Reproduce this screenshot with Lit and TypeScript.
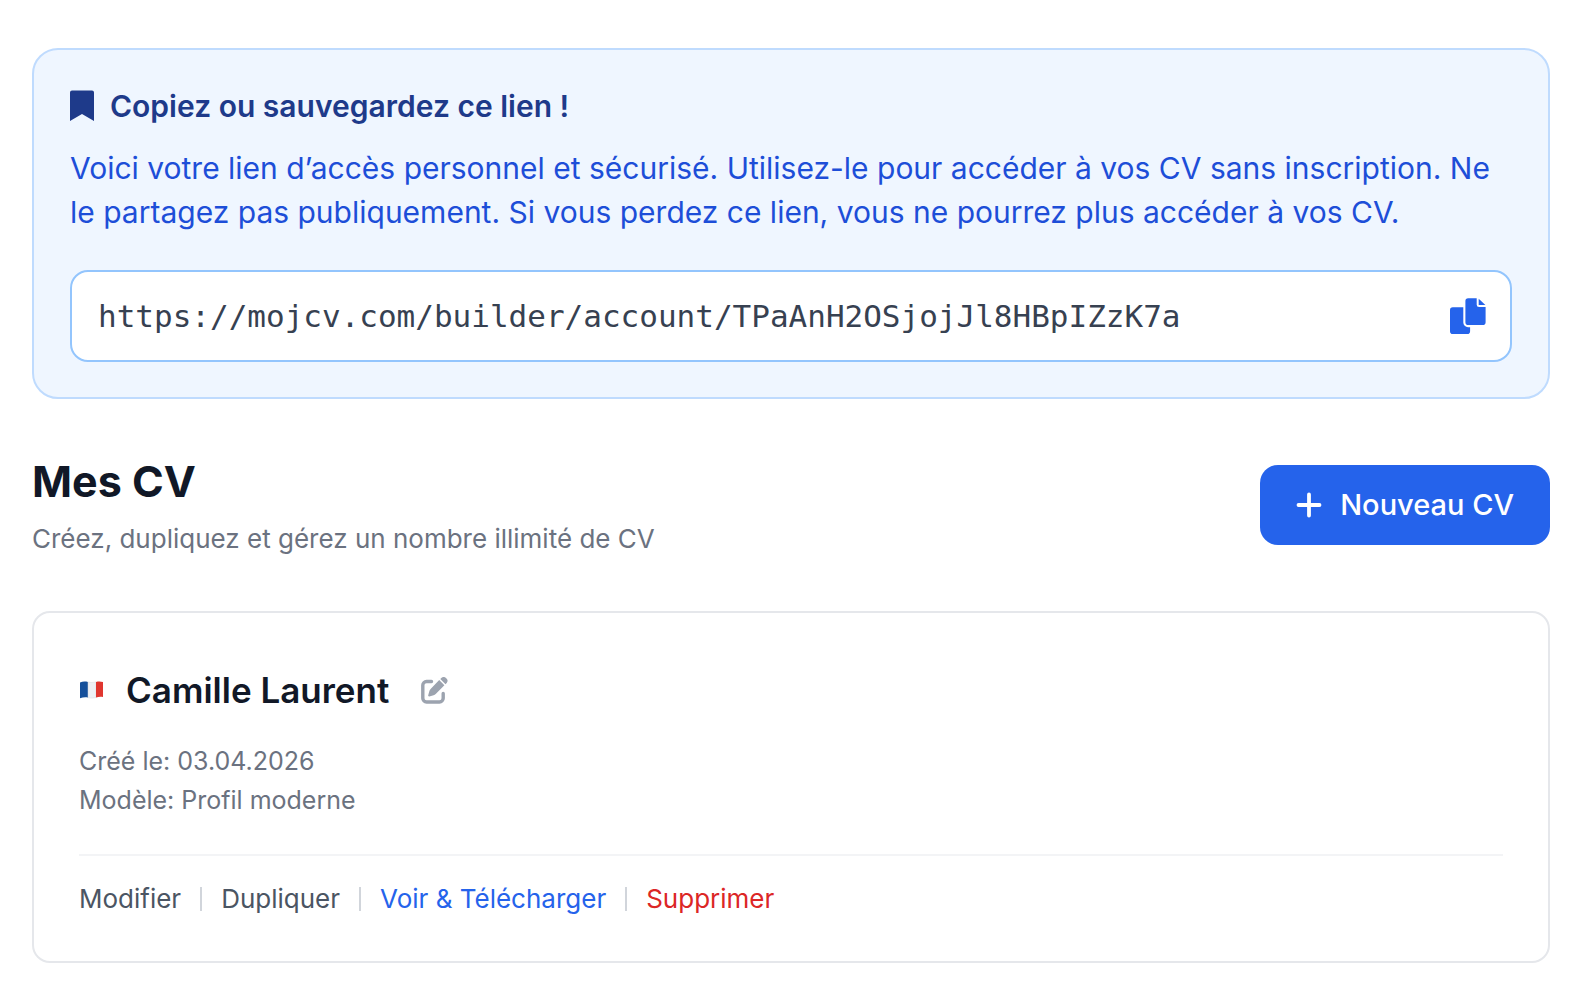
import { LitElement, html, css } from "lit";
import { customElement, property } from "lit/decorators.js";

const base = css`
  :host {
    display: block;
    box-sizing: border-box;
    font-family: Inter, sans-serif;
  }
  *,
  *::before {
    box-sizing: border-box;
  }
  h1,
  h2,
  p {
    margin: 0;
  }
  svg {
    display: block;
    flex: none;
  }
  button {
    margin: 0;
    padding: 0;
    border: 0;
    background: none;
    font: inherit;
    color: inherit;
    cursor: pointer;
  }
`;

@customElement("access-link")
class AccessLink extends LitElement {
  @property() url = "";

  static styles = [
    base,
    css`
      .panel {
        padding: 34px 36px 35px;
        border: 2px solid #bfdbfe;
        border-radius: 26px;
        background: #eff6ff;
      }
      .title {
        display: flex;
        align-items: center;
        gap: 16px;
        color: #1e3a8a;
        font-size: 30px;
        line-height: 44px;
        font-weight: 600;
      }
      .text {
        margin-top: 18px;
        color: #1d4ed8;
        font-size: 30px;
        line-height: 44px;
      }
      .field {
        display: flex;
        align-items: center;
        gap: 24px;
        margin-top: 36px;
        padding: 24px;
        border: 2px solid #93c5fd;
        border-radius: 18px;
        background: #fff;
      }
      .url {
        flex: 1;
        min-width: 0;
        height: 40px;
        padding: 0 2px;
        border: 0;
        outline: 0;
        background: none;
        color: #374151;
        font: 31px "DejaVu Sans Mono", monospace;
      }
      .copy {
        color: #2563eb;
      }
    `,
  ];

  private copy() {
    navigator.clipboard?.writeText(this.url);
  }

  render() {
    return html`
      <section class="panel">
        <h2 class="title">
          <svg width="24" height="32" viewBox="0 0 24 32" fill="currentColor" aria-hidden="true">
            <path d="M2 .5H22a2 2 0 0 1 2 2V31L12 24 0 31V2.500A2 2 0 0 1 2 .5Z" />
          </svg>
          <span>Copiez ou sauvegardez ce lien&nbsp;!</span>
        </h2>
        <p class="text">
          Voici votre lien d’accès personnel et sécurisé. Utilisez-le pour accéder à vos CV sans
          inscription. Ne le partagez pas publiquement. Si vous perdez ce lien, vous ne pourrez plus
          accéder à vos CV.
        </p>
        <div class="field">
          <input class="url" type="text" readonly aria-label="Lien d’accès" .value=${this.url} />
          <button class="copy" type="button" aria-label="Copier le lien" @click=${this.copy}>
            <svg width="36" height="36" viewBox="0 0 36 36" fill="currentColor" aria-hidden="true">
              <path
                d="M18.2 .3H26.7V6.700A2.400 2.400 0 0 0 29.1 9.100H35.600V24.300A2.800 2.800 0 0 1 32.800 27.100H18.200A2.800 2.800 0 0 1 15.400 24.300V3.100A2.800 2.800 0 0 1 18.200 .3Z"
              />
              <path d="M28.700 .7 35.400 7.100H28.700Z" />
              <path
                d="M2.800 9.200H13.300V24.500A4.700 4.700 0 0 0 18 29.200H20.100V33.200A2.800 2.800 0 0 1 17.300 36H2.800A2.800 2.800 0 0 1 0 33.200V12A2.800 2.800 0 0 1 2.800 9.200Z"
              />
            </svg>
          </button>
        </div>
      </section>
    `;
  }
}

@customElement("cv-card")
class CvCard extends LitElement {
  @property() name = "";
  @property() created = "";
  @property() template = "";

  static styles = [
    base,
    css`
      .card {
        padding: 53px 45px 43px;
        border: 2px solid #e5e7eb;
        border-radius: 18px;
        background: #fff;
      }
      .head {
        display: flex;
        align-items: center;
      }
      .name {
        margin: 0 32px 0 22px;
        color: #111827;
        font-size: 35px;
        line-height: 48px;
        font-weight: 600;
      }
      .edit {
        color: #9ca3af;
      }
      .meta {
        margin-top: 28px;
        color: #6b7280;
        font-size: 25px;
        line-height: 39px;
      }
      .actions {
        display: flex;
        flex-wrap: wrap;
        align-items: center;
        gap: 19px;
        margin-top: 34px;
        padding-top: 24px;
        border-top: 2px solid #f3f4f6;
        color: #4b5563;
        font-size: 26px;
        line-height: 38px;
      }
      .link {
        color: inherit;
        text-decoration: none;
      }
      .primary {
        color: #2563eb;
      }
      .danger {
        color: #dc2626;
      }
      .bar {
        width: 2px;
        height: 24px;
        background: #d1d5db;
      }
    `,
  ];

  render() {
    return html`
      <article class="card">
        <div class="head">
          <svg width="25" height="20" viewBox="0 0 25 20" role="img" aria-label="Français">
            <path d="M1 2.400C4 1.300 6.500 1.500 9 2V17.600C6.500 17 4 17.200 1 18.300Z" fill="#15509b" />
            <path
              d="M9 2C12 2.600 14 2.600 17 1.900V17.500C14 18.200 12 18.200 9 17.600Z"
              fill="#eef0f4"
              stroke="#d5d8de"
              stroke-width=".5"
            />
            <path d="M17 1.900C19.500 1.300 21.500 1.300 24 2V17C21.500 16.500 19.500 16.800 17 17.400Z" fill="#e0362f" />
          </svg>
          <h2 class="name">${this.name}</h2>
          <button class="edit" type="button" aria-label="Renommer">
            <svg width="27" height="27" viewBox="0 0 27 27" aria-hidden="true">
              <path
                d="M10.500 4.500H5.500A3.700 3.700 0 0 0 1.800 8.200V21.300A3.700 3.700 0 0 0 5.500 25H18.500A3.700 3.700 0 0 0 22.200 21.300V16.500"
                fill="none"
                stroke="currentColor"
                stroke-width="3.400"
                stroke-linecap="round"
              />
              <path
                d="M18.200 3.100 23.400 8.300 14.700 17C14.100 17.600 13.400 18 12.600 18.200L8.300 19.400C7.600 19.600 7 19 7.200 18.300L8.400 14C8.600 13.200 9 12.500 9.600 11.900Z"
                fill="currentColor"
              />
              <path
                d="M19.300 2 20.600 .8C21.800 -.3 23.600 -.3 24.700 .8L25.700 1.800C26.900 2.900 26.900 4.700 25.700 5.900L24.500 7.200Z"
                fill="currentColor"
              />
            </svg>
          </button>
        </div>
        <div class="meta">
          <p>Créé le: ${this.created}</p>
          <p>Modèle: ${this.template}</p>
        </div>
        <div class="actions">
          <a class="link" href="#modifier">Modifier</a>
          <span class="bar"></span>
          <button type="button">Dupliquer</button>
          <span class="bar"></span>
          <a class="link primary" href="#voir">Voir &amp; Télécharger</a>
          <span class="bar"></span>
          <button class="danger" type="button">Supprimer</button>
        </div>
      </article>
    `;
  }
}

@customElement("app-root")
class AppRoot extends LitElement {
  static styles = [
    base,
    css`
      :host {
        min-height: 100vh;
        background: #fff;
      }
      .page {
        display: flex;
        flex-direction: column;
        gap: 54px;
        padding: 48px 40px 24px 32px;
      }
      .bar {
        display: flex;
        flex-wrap: wrap;
        align-items: center;
        justify-content: space-between;
        gap: 24px;
      }
      .heading {
        color: #111827;
        font-size: 43px;
        line-height: 56px;
        font-weight: 700;
      }
      .sub {
        margin-top: 12px;
        color: #6b7280;
        font-size: 26px;
        line-height: 36px;
      }
      .new {
        display: flex;
        align-items: center;
        gap: 18px;
        padding: 18px 36px;
        border-radius: 18px;
        background: #2563eb;
        color: #fff;
        font-size: 29px;
        line-height: 44px;
        font-weight: 500;
      }
    `,
  ];

  render() {
    return html`
      <main class="page">
        <access-link url="https://mojcv.com/builder/account/TPaAnH2OSjojJl8HBpIZzK7a"></access-link>
        <header class="bar">
          <div>
            <h1 class="heading">Mes CV</h1>
            <p class="sub">Créez, dupliquez et gérez un nombre illimité de CV</p>
          </div>
          <button class="new" type="button">
            <svg width="26" height="26" viewBox="0 0 26 26" aria-hidden="true">
              <path d="M13 2.500V23.500M2.500 13H23.500" stroke="currentColor" stroke-width="3.800" stroke-linecap="round" />
            </svg>
            <span>Nouveau CV</span>
          </button>
        </header>
        <cv-card name="Camille Laurent" created="03.04.2026" template="Profil moderne"></cv-card>
      </main>
    `;
  }
}
